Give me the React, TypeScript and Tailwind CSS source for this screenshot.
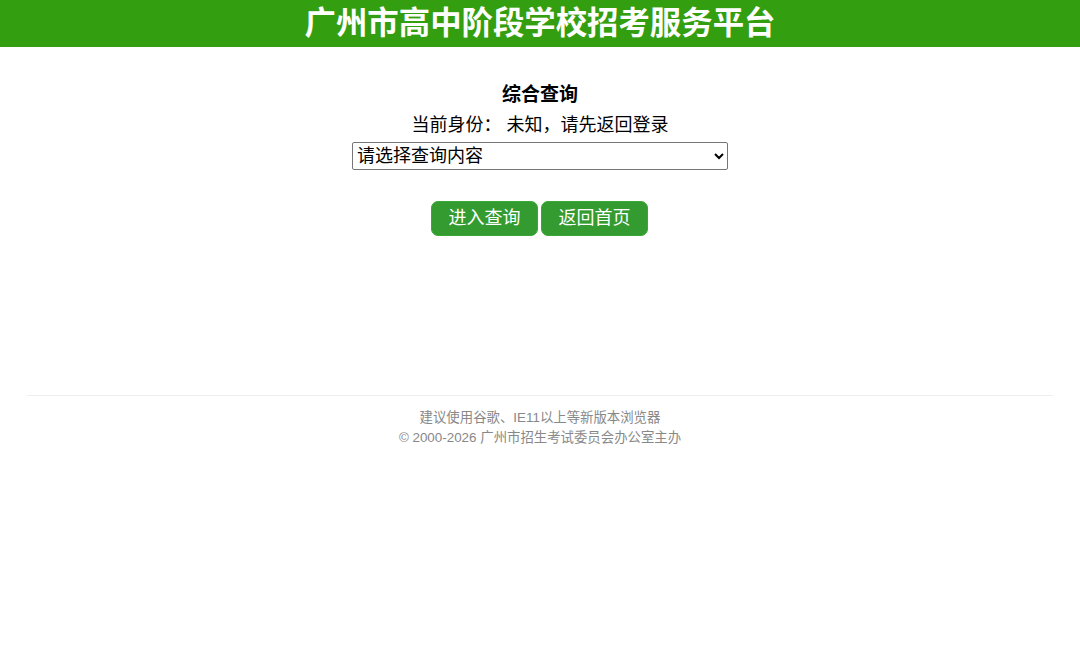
export default function App() {
  return (
    <div
      className="min-h-screen bg-white text-black"
      style={{ fontFamily: '"Liberation Sans", "Noto Sans CJK SC", sans-serif' }}
    >
      <div className="h-[47px] bg-[#339e10] flex items-center justify-center pt-[1px]">
        <h1 className="text-[31.4px] font-bold text-white leading-none">广州市高中阶段学校招考服务平台</h1>
      </div>

      <div className="flex flex-col items-center pt-[33px]">
        <div className="text-[19px] font-bold leading-[30px]">综合查询</div>
        <div className="text-[18px] leading-[30px]">当前身份： 未知，请先返回登录</div>
        <select className="mt-[2px] w-[376px] h-[28px] border border-[#767676] rounded-[2px] bg-white text-[18px] px-0 text-black">
          <option>请选择查询内容</option>
        </select>
        <div className="flex gap-[3px] mt-[31px] pr-[1px]">
          <button className="w-[107px] h-[35px] rounded-[7px] bg-[#339b2f] border border-[#3aa835] text-white text-[18px]">
            进入查询
          </button>
          <button className="w-[107px] h-[35px] rounded-[7px] bg-[#339b2f] border border-[#3aa835] text-white text-[18px]">
            返回首页
          </button>
        </div>
      </div>

      <div className="mx-[27px] mt-[159px] border-t border-[#eeeeee] pt-[12px] text-center text-[13.4px] leading-[20px] text-[#888888]">
        <div>建议使用谷歌、IE11以上等新版本浏览器</div>
        <div>© 2000-2026 广州市招生考试委员会办公室主办</div>
      </div>
    </div>
  );
}
